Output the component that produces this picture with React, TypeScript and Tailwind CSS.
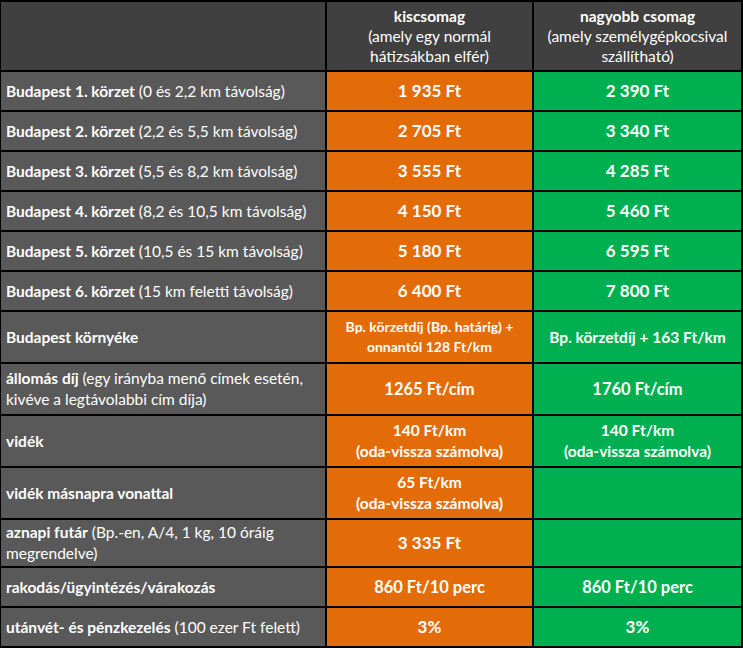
import React from "react";

type Row = {
  h: string;
  label: React.ReactNode;
  a: React.ReactNode;
  b: React.ReactNode;
};

const big = "text-[17px] font-bold";
const mid = "text-[16.5px] font-bold";
const small = "text-[14px] font-bold leading-[20px]";
const small2 = "text-[15.5px] font-bold leading-[21px]";

const rows: Row[] = [
  { h: "h-[38px]", label: <><b>Budapest 1. körzet</b> (0 és 2,2 km távolság)</>, a: <span className={big}>1 935 Ft</span>, b: <span className={big}>2 390 Ft</span> },
  { h: "h-[38px]", label: <><b>Budapest 2. körzet</b> (2,2 és 5,5 km távolság)</>, a: <span className={big}>2 705 Ft</span>, b: <span className={big}>3 340 Ft</span> },
  { h: "h-[38px]", label: <><b>Budapest 3. körzet</b> (5,5 és 8,2 km távolság)</>, a: <span className={big}>3 555 Ft</span>, b: <span className={big}>4 285 Ft</span> },
  { h: "h-[38px]", label: <><b>Budapest 4. körzet</b> (8,2 és 10,5 km távolság)</>, a: <span className={big}>4 150 Ft</span>, b: <span className={big}>5 460 Ft</span> },
  { h: "h-[38px]", label: <><b>Budapest 5. körzet</b> (10,5 és 15 km távolság)</>, a: <span className={big}>5 180 Ft</span>, b: <span className={big}>6 595 Ft</span> },
  { h: "h-[38px]", label: <><b>Budapest 6. körzet</b> (15 km feletti távolság)</>, a: <span className={big}>6 400 Ft</span>, b: <span className={big}>7 800 Ft</span> },
  { h: "h-[50px]", label: <b>Budapest környéke</b>, a: <span className={small}>Bp. körzetdíj (Bp. határig) +<br />onnantól 128 Ft/km</span>, b: <span className={small2}>Bp. körzetdíj + 163 Ft/km</span> },
  { h: "h-[50px]", label: <><b>állomás díj</b> (egy irányba menő címek esetén,<br />kivéve a legtávolabbi cím díja)</>, a: <span className={mid}>1265 Ft/cím</span>, b: <span className={mid}>1760 Ft/cím</span> },
  { h: "h-[50px]", label: <b>vidék</b>, a: <span className={small2}>140 Ft/km<br />(oda-vissza számolva)</span>, b: <span className={small2}>140 Ft/km<br />(oda-vissza számolva)</span> },
  { h: "h-[50px]", label: <b>vidék másnapra vonattal</b>, a: <span className={small2}>65 Ft/km<br />(oda-vissza számolva)</span>, b: null },
  { h: "h-[46px]", label: <><b>aznapi futár</b> (Bp.-en, A/4, 1 kg, 10 óráig<br />megrendelve)</>, a: <span className={big}>3 335 Ft</span>, b: null },
  { h: "h-[38px]", label: <b>rakodás/ügyintézés/várakozás</b>, a: <span className={mid}>860 Ft/10 perc</span>, b: <span className={mid}>860 Ft/10 perc</span> },
  { h: "h-[38px]", label: <><b>utánvét- és pénzkezelés</b> (100 ezer Ft felett)</>, a: <span className={big}>3%</span>, b: <span className={big}>3%</span> },
];

export default function App() {
  return (
    <div
      className="w-[743px] h-[648px] bg-black pt-[2px] pl-[1px] pr-[2px] pb-[2px] text-white"
      style={{ fontFamily: "Lato, 'Noto Sans', sans-serif" }}
    >
      <div className="grid grid-cols-[324px_205px_207px] gap-[2px]">
        <div className="h-[68px] bg-[#404040]" />
        <div className="h-[68px] bg-[#404040] flex flex-col items-center justify-center text-[15.5px] leading-[20px] text-center">
          <span className="font-bold">kiscsomag</span>
          <span>(amely egy normál</span>
          <span>hátizsákban elfér)</span>
        </div>
        <div className="h-[68px] bg-[#404040] flex flex-col items-center justify-center text-[15.5px] leading-[20px] text-center">
          <span className="font-bold">nagyobb csomag</span>
          <span>(amely személygépkocsival</span>
          <span>szállítható)</span>
        </div>
        {rows.map((r, i) => (
          <React.Fragment key={i}>
            <div className={`${r.h} bg-[#595959] flex items-center pl-[5px] text-[15.5px] leading-[21px] whitespace-nowrap overflow-hidden`}>
              <span>{r.label}</span>
            </div>
            <div className={`${r.h} bg-[#E36C09] flex items-center justify-center text-center`}>
              {r.a}
            </div>
            <div className={`${r.h} bg-[#00B050] flex items-center justify-center text-center`}>
              {r.b}
            </div>
          </React.Fragment>
        ))}
      </div>
    </div>
  );
}
